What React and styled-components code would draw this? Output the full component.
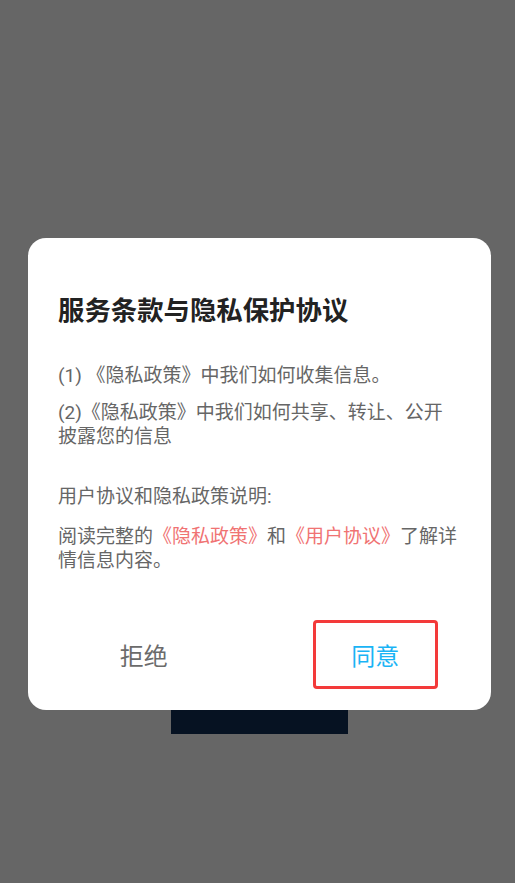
import React from 'react';
import styled, { createGlobalStyle } from 'styled-components';

const GlobalStyle = createGlobalStyle`
  html, body {
    margin: 0;
    padding: 0;
    background: #666666;
  }
  body {
    font-family: Roboto, "Noto Sans CJK SC", sans-serif;
  }
`;

const Screen = styled.div`
  width: 515px;
  height: 883px;
  background: #666666;
  display: flex;
  flex-direction: column;
  align-items: center;
  padding-top: 700px;
  box-sizing: border-box;
  position: relative;
  overflow: hidden;
`;

const DarkBlock = styled.div`
  width: 177px;
  height: 34px;
  margin-left: 4px;
  background: #061222;
`;

const Overlay = styled.div`
  position: absolute;
  inset: 0;
  display: flex;
  justify-content: flex-start;
  padding: 238px 0 0 28px;
  box-sizing: border-box;
`;

const Card = styled.div`
  width: 463px;
  height: 472px;
  background: #ffffff;
  border-radius: 18px;
  display: flex;
  flex-direction: column;
  box-sizing: border-box;
`;

const Body = styled.div`
  padding: 53px 30px 0;
`;

const Title = styled.h2`
  margin: 0 0 33px;
  font-size: 26.4px;
  line-height: 40px;
  font-weight: 700;
  color: #222222;
`;

const Para = styled.p`
  margin: 0 0 ${props => props.$gap || 0}px;
  font-size: 19px;
  line-height: 24px;
  color: #666666;
`;

const Link = styled.span`
  color: #f07373;
`;

const Actions = styled.div`
  display: flex;
  margin-top: 47px;
`;

const Slot = styled.div`
  flex: 1;
  display: flex;
  justify-content: center;
`;

const Button = styled.button`
  width: 125px;
  height: 69px;
  box-sizing: border-box;
  background: transparent;
  border: 3px solid ${props => (props.$highlight ? '#f33a3a' : 'transparent')};
  border-radius: 4px;
  font-family: Roboto, "Noto Sans CJK SC", sans-serif;
  font-size: 24px;
  color: ${props => (props.$primary ? '#1ab4f5' : '#6b6b6b')};
  padding: 0;
  cursor: pointer;
`;

const App = () => {
  return (
    <>
      <GlobalStyle />
      <Screen>
        <DarkBlock />
        <Overlay>
          <Card>
            <Body>
              <Title>服务条款与隐私保护协议</Title>
              <Para $gap={13}>(1) 《隐私政策》中我们如何收集信息。</Para>
              <Para $gap={36}>(2)《隐私政策》中我们如何共享、转让、公开披露您的信息</Para>
              <Para $gap={16}>用户协议和隐私政策说明:</Para>
              <Para>
                阅读完整的<Link>《隐私政策》</Link>和<Link>《用户协议》</Link>了解详情信息内容。
              </Para>
            </Body>
            <Actions>
              <Slot>
                <Button>拒绝</Button>
              </Slot>
              <Slot>
                <Button $primary $highlight>同意</Button>
              </Slot>
            </Actions>
          </Card>
        </Overlay>
      </Screen>
    </>
  );
};

export default App;
